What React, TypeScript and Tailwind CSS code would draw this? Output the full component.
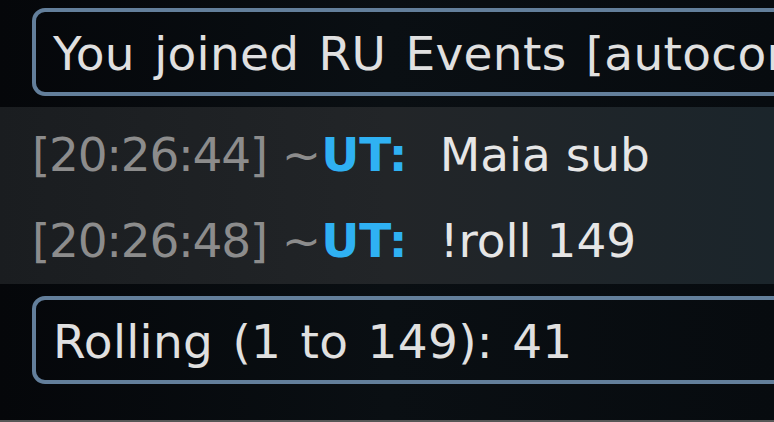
import React from 'react'

const font = { fontFamily: '"DejaVu Sans", Verdana, sans-serif' }

function Notice({ text, className }: { text: string; className?: string }) {
  return (
    <div
      className={`ml-[32px] -mr-[40px] h-[88px] shrink-0 rounded-[13px] border-4 border-[#637f9b] pl-[17px] text-[47px] leading-[55px] tracking-[0.3px] [word-spacing:4px] whitespace-nowrap text-[#e0e0e0] ${className ?? ''}`}
    >
      {text}
    </div>
  )
}

function ChatLine({ time, nick, msg }: { time: string; nick: string; msg: string }) {
  return (
    <div className="flex h-[86px] items-center pl-[32px] text-[47px] leading-[86px] whitespace-nowrap">
      <span className="tracking-[-1.3px] text-[#8c8c8c]">[{time}]</span>
      <span className="ml-[15px] text-[#8c8c8c]">~</span>
      <span className="font-bold text-[#2fb1f3]">{nick}:</span>
      <span className="ml-[32px] text-[#e6e6e6]">{msg}</span>
    </div>
  )
}

export default function App() {
  return (
    <div
      style={font}
      className="flex h-[422px] w-[774px] flex-col overflow-hidden bg-gradient-to-r from-[#05070a] via-[#0a0f13] to-[#070b0f]"
    >
      <div className="h-[8px] shrink-0" />
      <Notice text="You joined RU Events [autoconnect]" className="pt-[14px]" />
      <div className="mt-[11px] flex h-[177px] shrink-0 flex-col bg-gradient-to-r from-[#1a1d20] via-[#222528] to-[#1b252b] pt-[5px]">
        <ChatLine time="20:26:44" nick="UT" msg="Maia sub" />
        <ChatLine time="20:26:48" nick="UT" msg="!roll 149" />
      </div>
      <div className="h-[12px] shrink-0" />
      <Notice text="Rolling (1 to 149): 41" className="pt-[14px]" />
      <div className="flex-1" />
      <div className="h-[2px] shrink-0 bg-[#575757]" />
    </div>
  )
}
